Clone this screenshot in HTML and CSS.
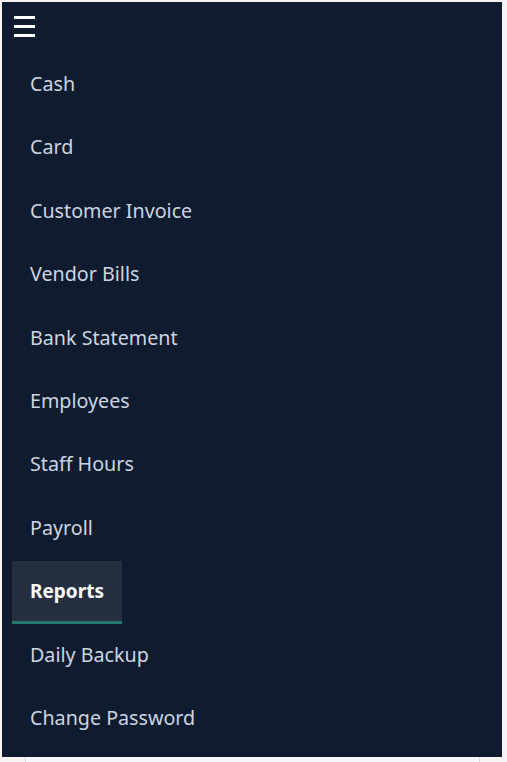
FILE: index.html
```html
<!DOCTYPE html>
<html lang="en">

<head>
  <meta charset="UTF-8">
  <meta name="viewport" content="width=device-width, initial-scale=1.0">
  <title>Accounts</title>

  <link rel="stylesheet" href="styles.css">
</head>

<body>
  <!-- Side navigation -->
  <nav class="sidebar">
    <button class="menu-toggle" aria-label="Menu">
      <span></span>
      <span></span>
      <span></span>
    </button>

    <ul class="nav-list">
      <li><a class="nav-link" href="#">Cash</a></li>
      <li><a class="nav-link" href="#">Card</a></li>
      <li><a class="nav-link" href="#">Customer Invoice</a></li>
      <li><a class="nav-link" href="#">Vendor Bills</a></li>
      <li><a class="nav-link" href="#">Bank Statement</a></li>
      <li><a class="nav-link" href="#">Employees</a></li>
      <li><a class="nav-link" href="#">Staff Hours</a></li>
      <li><a class="nav-link" href="#">Payroll</a></li>
      <li><a class="nav-link active" href="#">Reports</a></li>
      <li><a class="nav-link" href="#">Daily Backup</a></li>
      <li><a class="nav-link" href="#">Change Password</a></li>
    </ul>
  </nav>

  <!-- Page content sits under the menu -->
  <main class="content"></main>
</body>

</html>
```

FILE: styles.css
```css
body {
  font-family: "Noto Sans", "Open Sans", sans-serif;
  margin: 0;
  background-color: #f9f4f4;
}

.sidebar {
  margin: 2px 5px 0 2px;
  height: 755px;
  background-color: #0f1b2e;
  box-sizing: border-box;
  padding: 14px 10px 0 10px;
}

.menu-toggle {
  display: flex;
  flex-direction: column;
  gap: 6px;
  padding: 0;
  margin-left: 2px;
  border: none;
  background: none;
  cursor: pointer;
}

.menu-toggle span {
  display: block;
  width: 21px;
  height: 3px;
  background-color: #ffffff;
}

.nav-list {
  list-style: none;
  margin: 17px 0 0 0;
  padding: 0;
}

.nav-list li {
  height: 63.4px;
}

.nav-link {
  display: inline-block;
  padding: 16px 18px;
  font-size: 19.7px;
  line-height: 28px;
  color: #cbd5e1;
  text-decoration: none;
  border-bottom: 3px solid transparent;
}

.nav-link.active {
  font-size: 19px;
  background-color: #252f3f;
  color: #ffffff;
  font-weight: bold;
  border-bottom-color: #24796a;
}

.content {
  margin: 0 27px 0 25px;
  height: 40px;
  background-color: #f4f6fb;
  border-left: 1px solid #d6d8de;
  border-right: 1px solid #d6d8de;
}
```
